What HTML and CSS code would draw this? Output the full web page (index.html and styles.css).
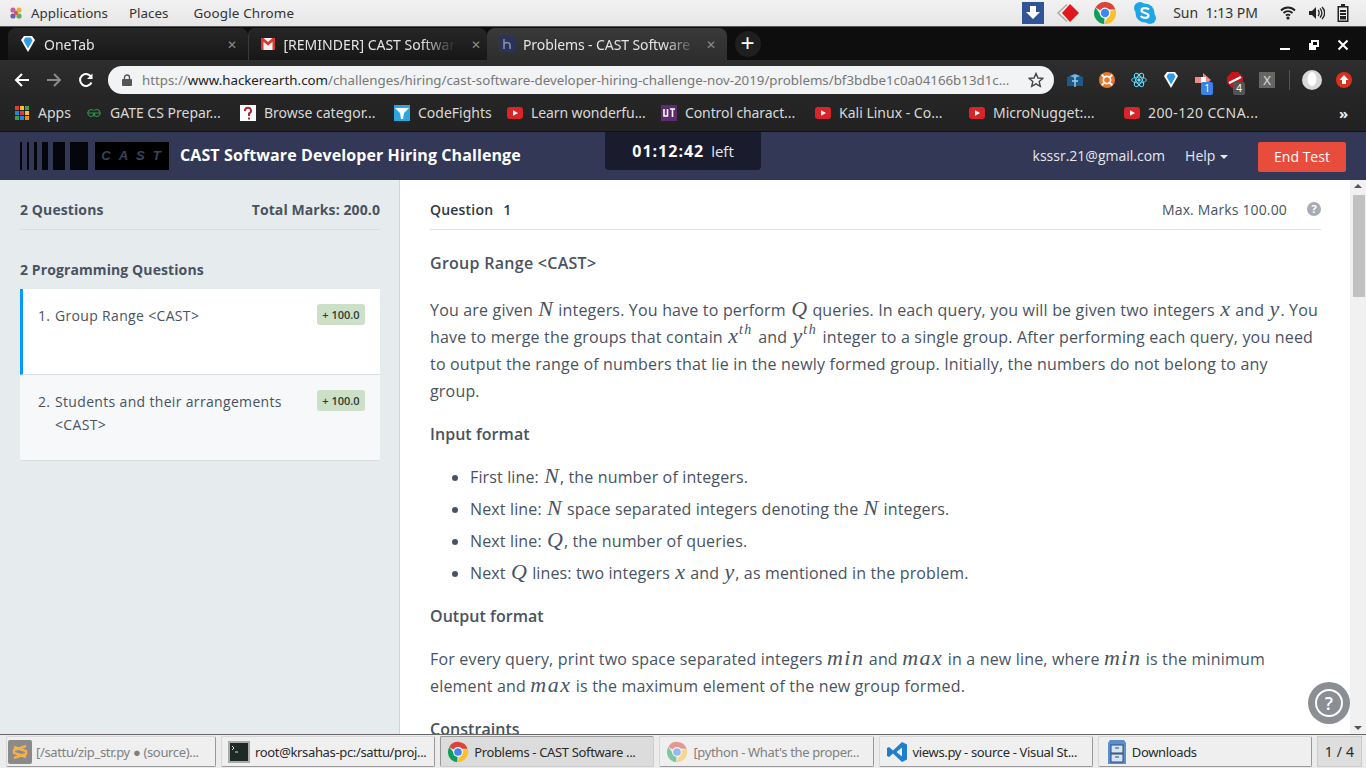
FILE: index.html
```html
<!DOCTYPE html>
<html>
<head>
	<title>Problems - CAST Software</title>
	<meta charset="UTF-8">
	<link rel="stylesheet" href="styles.css">
</head>
<body>

<svg class="defs" width="0" height="0">
	<symbol id="chrome" viewBox="0 0 24 24">
		<path d="M12 12 L2.5 6.5 A11 11 0 0 1 22.5 8.5 L12 8.5 Z" fill="#db4437"/>
		<path d="M12 12 L22.5 8.5 A11 11 0 0 1 11 23 L16 14 Z" fill="#fbc02d"/>
		<path d="M12 12 L11 23 A11 11 0 0 1 2.5 6.5 L8 14 Z" fill="#0f9d58"/>
		<circle cx="12" cy="12" r="5.4" fill="#fff"/>
		<circle cx="12" cy="12" r="4.2" fill="#4285f4"/>
	</symbol>
	<symbol id="yt" viewBox="0 0 16 12">
		<rect width="16" height="12" rx="3" fill="#d9252a"/>
		<path d="M6 3.2 L11 6 L6 8.8 Z" fill="#fff"/>
	</symbol>
	<symbol id="gem" viewBox="0 0 16 18">
		<path d="M1 5 L4 1 H12 L15 5 L8 17 Z" fill="#fff"/>
		<path d="M3.5 5.5 L5.5 2.5 H10.5 L12.5 5.5 L8 13.5 Z" fill="#2f9be8"/>
	</symbol>
</svg>

<div class="panel">
	<div class="panel-left">
		<svg class="panel-logo" width="16" height="16" viewBox="0 0 16 16"><circle cx="5" cy="5" r="2.6" fill="#c75ea8"/><circle cx="11" cy="5" r="2.6" fill="#e8b23a"/><circle cx="5" cy="11" r="2.6" fill="#6a5fb5"/><circle cx="11" cy="11" r="2.6" fill="#5fae5a"/><circle cx="8" cy="8" r="2" fill="#d8523c"/></svg>
		<span class="panel-app">Applications</span>
		<span class="panel-menu">Places</span>
		<span class="panel-menu panel-chrome">Google Chrome</span>
	</div>
	<div class="panel-right">
		<svg class="tray tray-dl" width="22" height="22" viewBox="0 0 22 22"><rect width="22" height="22" fill="#2f5597"/><path d="M8 4 H14 V10 H18 L11 17 L4 10 H8 Z" fill="#fff"/></svg>
		<svg class="tray tray-dia" width="24" height="20" viewBox="0 0 24 20"><path d="M11 1.5 L2 10 L11 18.5" fill="none" stroke="#aaa" stroke-width="1.5"/><path d="M6 10 L14 1 L23 10 L14 19 Z" fill="#e0181e"/></svg>
		<svg class="tray" width="24" height="24"><use href="#chrome"/></svg>
		<svg class="tray" width="24" height="24" viewBox="0 0 24 24"><circle cx="7" cy="7" r="6" fill="#1ea5e8"/><circle cx="17" cy="17" r="6" fill="#1ea5e8"/><circle cx="12" cy="12" r="9.5" fill="#1ea5e8"/><path d="M16 8.5 C14 6.5 8.5 6.5 8.5 9.5 C8.5 12.5 15.5 11.5 15.5 14.5 C15.5 17.5 9.5 17.5 7.8 15" fill="none" stroke="#fff" stroke-width="2.2"/></svg>
		<span class="clock">Sun&nbsp; 1:13 PM</span>
		<svg class="tray-wifi" width="16" height="14" viewBox="0 0 16 14"><path d="M1 4.5 C5 .5 11 .5 15 4.5 M3.5 7 C6 4.5 10 4.5 12.5 7 M6 9.5 C7 8.5 9 8.5 10 9.5" fill="none" stroke="#222" stroke-width="1.8"/><circle cx="8" cy="12" r="1.6" fill="#222"/></svg>
		<svg class="tray-vol" width="16" height="14" viewBox="0 0 16 14"><path d="M0 5 H3 L7 1 V13 L3 9 H0 Z" fill="#222"/><path d="M9 4 C10.5 5.5 10.5 8.5 9 10 M11 2.5 C13.5 5 13.5 9 11 11.5 M13 1 C16.5 4.5 16.5 9.5 13 13" fill="none" stroke="#222" stroke-width="1.3"/></svg>
		<svg width="12" height="18" viewBox="0 0 12 18"><path d="M4 0 H8 V2 H11.5 V18 H.5 V2 H4 Z" fill="#222"/><path d="M2 3.5 H10 V16.5 H2 Z" fill="#eee"/><path d="M3 6 H9 V8 H3 Z M3 9 H9 V11 H3 Z M3 12 H9 V15.5 H3 Z" fill="#222"/></svg>
	</div>
</div>

<div class="tabstrip">
	<div class="tab">
		<svg width="16" height="18"><use href="#gem"/></svg>
		<span class="tab-title">OneTab</span>
		<span class="tab-x">✕</span>
	</div>
	<div class="tab tab-mail">
		<svg width="14" height="12" viewBox="0 0 14 12"><rect width="14" height="12" fill="#f2f2f2"/><path d="M0 0 H2.5 L7 4 L11.5 0 H14 V12 H11.5 V3.8 L7 7.5 L2.5 3.8 V12 H0 Z" fill="#d93a2f"/></svg>
		<span class="tab-title">[REMINDER] CAST Software</span>
		<span class="tab-x">✕</span>
	</div>
	<div class="tab tab-active">
		<svg width="16" height="16" viewBox="0 0 16 16"><rect width="16" height="16" fill="#2b3358"/><path d="M5 3 V13 M5 8 C7 6 11 6 11 9 V13" fill="none" stroke="#8a92b0" stroke-width="1.5"/></svg>
		<span class="tab-title">Problems - CAST Software</span>
		<span class="tab-x">✕</span>
	</div>
	<div class="new-tab">+</div>
	<div class="win-btns">
		<svg width="12" height="12" viewBox="0 0 12 12"><rect x="1" y="9" width="10" height="2" fill="#fff"/></svg>
		<svg width="12" height="12" viewBox="0 0 12 12"><path d="M3 1 H11 V8 H8 V11 H1 V4 H3 Z M5 3 V6 H9 V3 Z" fill="#fff" fill-rule="evenodd"/></svg>
		<svg width="12" height="12" viewBox="0 0 12 12"><path d="M1.5 1.5 L10.5 10.5 M10.5 1.5 L1.5 10.5" stroke="#fff" stroke-width="2"/></svg>
	</div>
</div>

<div class="toolbar">
	<svg class="nav" width="16" height="16" viewBox="0 0 16 16"><path d="M15 8 H2 M8 2 L2 8 L8 14" fill="none" stroke="#fff" stroke-width="2"/></svg>
	<svg class="nav" width="16" height="16" viewBox="0 0 16 16"><path d="M1 8 H14 M8 2 L14 8 L8 14" fill="none" stroke="#8a8a8a" stroke-width="2"/></svg>
	<svg class="nav" width="16" height="16" viewBox="0 0 16 16"><path d="M13.5 10.5 A6 6 0 1 1 13 4.5" fill="none" stroke="#fff" stroke-width="2"/><path d="M14.5 1.5 V7 H9 Z" fill="#fff"/></svg>
	<div class="omnibox">
		<svg width="10" height="12" viewBox="0 0 10 12"><path d="M2.5 5 V3.5 A2.5 2.5 0 0 1 7.5 3.5 V5" fill="none" stroke="#555" stroke-width="1.4"/><rect y="5" width="10" height="7" rx="1" fill="#555"/></svg>
		<span class="url"><span class="url-dim">https://</span><span class="url-host">www.hackerearth.com</span><span class="url-dim">/challenges/hiring/cast-software-developer-hiring-challenge-nov-2019/problems/bf3bdbe1c0a04166b13d1c...</span></span>
		<svg class="star" width="16" height="16" viewBox="0 0 16 16"><path d="M8 1.5 L10 6 L14.8 6.4 L11.2 9.6 L12.3 14.4 L8 11.9 L3.7 14.4 L4.8 9.6 L1.2 6.4 L6 6 Z" fill="none" stroke="#444" stroke-width="1.4"/></svg>
	</div>
	<div class="exts">
		<svg width="16" height="16" viewBox="0 0 16 16"><path d="M0 5 L8 2 L16 5 V14 H0 Z" fill="#1d5a8a"/><path d="M3 4 L8 2 L13 4 L8 6 Z" fill="#6fb6e0"/><path d="M8 5 V15 M5 9 H11" stroke="#9fd0ee" stroke-width="1.4"/></svg>
		<svg width="16" height="16" viewBox="0 0 16 16"><circle cx="8" cy="8" r="8" fill="#e8772e"/><circle cx="8" cy="8" r="3.6" fill="none" stroke="#fff" stroke-width="1.6"/><path d="M2.8 2.8 L5.4 5.4 M13.2 2.8 L10.6 5.4 M2.8 13.2 L5.4 10.6 M13.2 13.2 L10.6 10.6" stroke="#fff" stroke-width="2"/></svg>
		<svg width="16" height="16" viewBox="0 0 16 16" fill="none" stroke="#61dafb" stroke-width=".9"><ellipse cx="8" cy="8" rx="7.4" ry="3"/><ellipse cx="8" cy="8" rx="7.4" ry="3" transform="rotate(60 8 8)"/><ellipse cx="8" cy="8" rx="7.4" ry="3" transform="rotate(120 8 8)"/><circle cx="8" cy="8" r="1.3" fill="#61dafb"/></svg>
		<svg width="16" height="18"><use href="#gem"/></svg>
		<div class="ext-badged">
			<svg width="16" height="16" viewBox="0 0 16 16"><path d="M0 5 H8 V1 L16 8 L8 15 V11 H0 Z" fill="#f08a86"/><rect x="6" y="5" width="5" height="6" fill="#fff"/></svg>
			<span class="badge badge-blue">1</span>
		</div>
		<div class="ext-badged">
			<svg width="16" height="16" viewBox="0 0 16 16"><path d="M5 0 H11 L16 5 V11 L11 16 H5 L0 11 V5 Z" fill="#c8141c"/><path d="M2 11 L14 5" stroke="#fff" stroke-width="2.4"/></svg>
			<span class="badge badge-grey">4</span>
		</div>
		<span class="ext-x">X</span>
		<span class="ext-sep"></span>
		<svg width="20" height="20" viewBox="0 0 20 20"><circle cx="10" cy="10" r="10" fill="#d8d8d8"/><ellipse cx="10" cy="9" rx="4.5" ry="7" fill="#fff"/></svg>
		<svg class="ext-last" width="16" height="16" viewBox="0 0 16 16"><circle cx="8" cy="8" r="8" fill="#d9301f"/><path d="M8 3 L12.5 8 H10 V12 H6 V8 H3.5 Z" fill="#fff"/></svg>
	</div>
</div>

<div class="bookmarks">
	<div class="bm bm-apps">
		<svg width="14" height="14" viewBox="0 0 14 14"><rect width="4" height="4" fill="#e53935"/><rect x="5" width="4" height="4" fill="#fbc02d"/><rect x="10" width="4" height="4" fill="#43a047"/><rect y="5" width="4" height="4" fill="#1e88e5"/><rect x="5" y="5" width="4" height="4" fill="#e53935"/><rect x="10" y="5" width="4" height="4" fill="#fbc02d"/><rect y="10" width="4" height="4" fill="#43a047"/><rect x="5" y="10" width="4" height="4" fill="#1e88e5"/><rect x="10" y="10" width="4" height="4" fill="#fb8c00"/></svg>
		<span>Apps</span>
	</div>
	<div class="bm bm-gate">
		<svg width="16" height="10" viewBox="0 0 16 10" fill="none" stroke="#2f8d46" stroke-width="1.1"><path d="M7.5 2.5 A3.3 3.3 0 1 0 7.5 7.5 V5 H1 M8.5 2.5 A3.3 3.3 0 1 1 8.5 7.5 V5 H15"/></svg>
		<span>GATE CS Prepar...</span>
	</div>
	<div class="bm bm-browse">
		<svg width="16" height="16" viewBox="0 0 16 16"><rect width="16" height="16" fill="#fff"/><path d="M5 6 A3 3 0 1 1 9 8.5 V11" fill="none" stroke="#b3262b" stroke-width="2"/><rect x="8" y="12.5" width="2" height="2" fill="#b3262b"/></svg>
		<span>Browse categor...</span>
	</div>
	<div class="bm bm-code">
		<svg width="16" height="16" viewBox="0 0 16 16"><rect width="16" height="16" fill="#2aa7df"/><path d="M1 3 H15 L10 8 L9 14 H7 L6 8 Z" fill="#fff"/></svg>
		<span>CodeFights</span>
	</div>
	<div class="bm bm-learn">
		<svg width="16" height="12"><use href="#yt"/></svg>
		<span>Learn wonderfu...</span>
	</div>
	<div class="bm bm-control">
		<svg width="16" height="16" viewBox="0 0 16 16"><rect width="16" height="16" fill="#5c2d6e"/><path d="M3 4 V11 H6.5 V4 M9 4 H14 M11.5 4 V12" fill="none" stroke="#fff" stroke-width="1.6"/></svg>
		<span>Control charact...</span>
	</div>
	<div class="bm bm-kali">
		<svg width="16" height="12"><use href="#yt"/></svg>
		<span>Kali Linux - Co...</span>
	</div>
	<div class="bm bm-micro">
		<svg width="16" height="12"><use href="#yt"/></svg>
		<span>MicroNugget:...</span>
	</div>
	<div class="bm bm-ccna">
		<svg width="16" height="12"><use href="#yt"/></svg>
		<span>200-120 CCNA...</span>
	</div>
	<span class="bm-more">»</span>
</div>

<header class="site-header">
	<div class="logo">
		<i class="bar w2"></i><i class="bar w2"></i><i class="bar w3"></i><i class="bar w6"></i><i class="bar w12"></i><i class="bar w18"></i>
		<span class="logo-box">CAST</span>
	</div>
	<div class="site-title">CAST Software Developer Hiring Challenge</div>
	<div class="timer"><b>01:12:42</b> left</div>
	<div class="header-right">
		<span class="email">ksssr.21@gmail.com</span>
		<span class="help">Help <i class="caret"></i></span>
		<span class="end-test">End Test</span>
	</div>
</header>

<div class="main">
	<aside class="sidebar">
		<div class="side-head">
			<span>2 Questions</span>
			<span>Total Marks: 200.0</span>
		</div>
		<div class="side-sub">2 Programming Questions</div>
		<div class="q-item q-current">
			<span class="q-num">1.</span>
			<span class="q-name">Group Range &lt;CAST&gt;</span>
			<span class="q-marks">+ 100.0</span>
		</div>
		<div class="q-item">
			<span class="q-num">2.</span>
			<span class="q-name">Students and their arrangements &lt;CAST&gt;</span>
			<span class="q-marks">+ 100.0</span>
		</div>
	</aside>

	<section class="content">
		<div class="q-head">
			<b>Question <span class="q-no">1</span></b>
			<span class="max-marks">Max. Marks 100.00</span>
			<span class="q-help">?</span>
		</div>
		<h2>Group Range &lt;CAST&gt;</h2>
		<p class="first">You are given <var>N</var> integers. You have to perform <var>Q</var> queries. In each query, you will be given two integers <var>x</var> and <var>y</var>. You have to merge the groups that contain <var>x<sup>th</sup></var> and <var>y<sup>th</sup></var> integer to a single group. After performing each query, you need to output the range of numbers that lie in the newly formed group. Initially, the numbers do not belong to any<br>group.</p>
		<h3>Input format</h3>
		<ul>
			<li>First line: <var>N</var>, the number of integers.</li>
			<li>Next line: <var>N</var> space separated integers denoting the <var>N</var> integers.</li>
			<li>Next line: <var>Q</var>, the number of queries.</li>
			<li>Next <var>Q</var> lines: two integers <var>x</var> and <var>y</var>, as mentioned in the problem.</li>
		</ul>
		<h3>Output format</h3>
		<p>For every query, print two space separated integers <var class="word">min</var> and <var class="word">max</var> in a new line, where <var class="word">min</var> is the minimum element and <var class="word">max</var> is the maximum element of the new group formed.</p>
		<h3>Constraints</h3>
		<div class="help-fab"><span>?</span></div>
	</section>

	<div class="scrollbar">
		<i class="arrow-up"></i>
		<div class="track"><div class="thumb"></div></div>
		<i class="arrow-down"></i>
	</div>
</div>

<div class="taskbar">
	<div class="task task-dim task-first">
		<svg width="24" height="24" viewBox="0 0 24 24"><rect width="24" height="24" rx="2" fill="#8a8a8a"/><path d="M18 6 L6 10 V13 L18 17 M6 18 L18 14 V11 L6 7" fill="none" stroke="#f5b04a" stroke-width="2.4"/></svg>
		<span>[/sattu/zip_str.py ● (source)...</span>
	</div>
	<div class="task">
		<svg width="22" height="22" viewBox="0 0 22 22"><rect width="22" height="22" fill="#aaa"/><rect x="2" y="2" width="18" height="18" fill="#1d2a26"/><path d="M4 5 L6 7 L4 9 M7 11 H10" fill="none" stroke="#ddd"/></svg>
		<span>root@krsahas-pc:/sattu/proj...</span>
	</div>
	<div class="task task-active">
		<svg width="22" height="22"><use href="#chrome"/></svg>
		<span>Problems - CAST Software ...</span>
	</div>
	<div class="task task-dim">
		<svg class="faded" width="22" height="22"><use href="#chrome"/></svg>
		<span>[python - What's the proper...</span>
	</div>
	<div class="task">
		<svg width="22" height="22" viewBox="0 0 22 22"><path d="M16 1 L21 3.5 V18.5 L16 21 L7 12.5 L3 16 L1 15 V7 L3 6 L7 9.5 Z M16 6.5 L10.5 11 L16 15.5 Z" fill="#1f7fcf" fill-rule="evenodd"/></svg>
		<span>views.py - source - Visual St...</span>
	</div>
	<div class="task task-files">
		<svg width="18" height="26" viewBox="0 0 18 26"><path d="M2 1 H16 L18 4 V25 H0 V4 Z" fill="#5a8fd0"/><rect x="3" y="6" width="12" height="8" fill="#d8e4f2" stroke="#2d4e7a"/><rect x="3" y="15" width="12" height="8" fill="#d8e4f2" stroke="#2d4e7a"/><path d="M7 9 H11 M7 18 H11" stroke="#2d4e7a"/></svg>
		<span>Downloads</span>
	</div>
	<div class="pager">1 / 4</div>
</div>

</body>
</html>
```

FILE: styles.css
```css
html, body {
	margin: 0;
	padding: 0;
}
body {
	width: 1366px;
	height: 768px;
	overflow: hidden;
	display: flex;
	flex-direction: column;
	font-family: "Open Sans", "Noto Sans", sans-serif;
	color: #49535f;
}
.defs { position: absolute; }
svg { display: block; flex: none; }

/* desktop panel */
.panel {
	height: 27px;
	flex: none;
	box-sizing: border-box;
	border-bottom: 1px solid #555;
	background: linear-gradient(#f2f2f2, #e6e6e6);
	display: flex;
	justify-content: space-between;
	align-items: center;
	font-family: "Noto Sans", sans-serif;
	font-size: 13.4px;
	color: #333;
	padding-bottom: 1px;
}
.panel-left { display: flex; align-items: center; padding-left: 8px; }
.panel-app { margin-left: 7px; }
.panel-menu { margin-left: 21px; }
.panel-chrome { margin-left: 25px; letter-spacing: .15px; }
.panel-right { display: flex; align-items: center; padding-right: 17px; }
.tray { margin-right: 16px; }
.tray-dl { margin-right: 12px; }
.tray-dia { margin-right: 13px; }
.clock { margin-right: 22px; margin-left: 0; font-size: 14px; }
.tray-wifi { margin-right: 13px; }
.tray-vol { margin-right: 12px; }

/* chrome tabs */
.tabstrip {
	height: 33px;
	flex: none;
	background: #0e0e0e;
	display: flex;
	align-items: flex-end;
	padding-left: 8px;
	font-family: "Noto Sans", sans-serif;
	font-size: 14px;
}
.tab {
	width: 239.5px;
	height: 32px;
	box-sizing: border-box;
	padding: 0 11px 0 12px;
	display: flex;
	align-items: center;
	gap: 8px;
	color: #e4e4e4;
	background: linear-gradient(#262626, #171717);
	border-radius: 8px 8px 0 0;
}
.tab + .tab { border-left: 1px solid #3a3a3a; }
.tab-mail { padding-right: 6px; gap: 9px; }
.tab-mail .tab-title { margin-right: 6px; }
.tab-active {
	background: linear-gradient(#3a3a3a, #2d2d2d);
	border-left: 0 !important;
}
.tab-active .tab-title { letter-spacing: -.1px; }
.tab-title {
	flex: 1;
	overflow: hidden;
	white-space: nowrap;
	-webkit-mask-image: linear-gradient(to right, #000 80%, transparent 100%);
	mask-image: linear-gradient(to right, #000 80%, transparent 100%);
}
.tab-x { font-size: 12px; color: #8a8a8a; }
.new-tab {
	width: 26px;
	height: 26px;
	margin: 0 0 3px 8px;
	border-radius: 50%;
	background: #1f1f1f;
	color: #fff;
	font-size: 24px;
	line-height: 24px;
	text-align: center;
	font-family: "Liberation Sans", sans-serif;
}
.win-btns {
	margin-left: auto;
	display: flex;
	gap: 17px;
	padding: 0 17px 9px 0;
}

/* chrome toolbar */
.toolbar {
	height: 34px;
	flex: none;
	box-sizing: border-box;
	padding: 6px 0 0 14px;
	background: linear-gradient(#2e2e2e, #262626);
	display: flex;
	align-items: center;
}
.nav { margin-right: 16px; }
.omnibox {
	width: 946px;
	height: 28px;
	margin-left: -2px;
	box-sizing: border-box;
	padding: 0 10px 0 14px;
	border-radius: 14px;
	background: #f1f3f4;
	display: flex;
	align-items: center;
	font-family: "Noto Sans", sans-serif;
	font-size: 13.3px;
}
.url {
	flex: 1;
	margin-left: 10px;
	white-space: nowrap;
	overflow: hidden;
}
.url-dim { color: #777; }
.url-host { color: #222; }
.star { margin-left: 2px; }
.exts {
	display: flex;
	align-items: center;
	gap: 16px;
	margin-left: 13px;
}
.ext-badged { position: relative; }
.badge {
	position: absolute;
	left: 6px;
	top: 10px;
	width: 12px;
	height: 13px;
	border-radius: 2px;
	color: #fff;
	font: 10px/13px "Noto Sans", sans-serif;
	text-align: center;
}
.badge-blue { background: #3b82e6; }
.badge-grey { background: #555; }
.ext-x {
	width: 16px;
	height: 16px;
	background: #666;
	color: #ddd;
	font: 13px/16px "Noto Sans", sans-serif;
	text-align: center;
}
.ext-sep { width: 1px; height: 20px; background: #555; margin: 0 -4px 0 -2px; }
.ext-last { margin-left: -2px; }

/* bookmarks */
.bookmarks {
	height: 38px;
	flex: none;
	background: linear-gradient(#262626, #222);
	display: flex;
	align-items: center;
	font-family: "Noto Sans", sans-serif;
	font-size: 14px;
	color: #d8d8d8;
	border-bottom: 1px solid #111;
	box-sizing: border-box;
}
.bm { display: flex; align-items: center; gap: 8px; white-space: nowrap; }
.bm-apps { margin-left: 15px; width: 71px; }
.bm-apps span { margin-left: 1px; }
.bm-gate { width: 154px; }
.bm-browse { width: 154px; }
.bm-code { width: 113px; }
.bm-learn { width: 154px; }
.bm-learn span, .bm-control span { letter-spacing: -.1px; }
.bm-control { width: 154px; }
.bm-kali { width: 154px; }
.bm-micro { width: 155px; }
.bm-ccna { width: 215px; }
.bm-ccna span { letter-spacing: .4px; }
.bm-more { font-size: 15px; font-weight: 700; color: #eee; }

/* page header */
.site-header {
	height: 48px;
	flex: none;
	background: #333856;
	display: flex;
	align-items: center;
	color: #fff;
	padding: 0 20px;
}
.logo { display: flex; align-items: center; width: 160px; gap: 5px; }
.bar { display: block; height: 28px; background: #05060c; }
.w2 { width: 2px; }
.w3 { width: 3px; }
.w6 { width: 6px; }
.w12 { width: 12px; }
.w18 { width: 18px; }
.logo-box {
	width: 74px;
	height: 28px;
	background: #000;
	margin-left: 2px;
	color: #3c4260;
	font: italic 700 13px/28px "Liberation Sans", sans-serif;
	letter-spacing: 8px;
	text-align: center;
	text-indent: 6px;
}
.site-title {
	font-size: 16px;
	font-weight: 700;
	letter-spacing: .1px;
	width: 425px;
	white-space: nowrap;
	margin-top: -2px;
}
.timer {
	width: 156px;
	height: 38px;
	align-self: flex-start;
	background: #1a1c2e;
	border-radius: 0 0 4px 4px;
	font-size: 15px;
	line-height: 38px;
	text-align: center;
	color: #e8e8e8;
}
.timer b { font-weight: 700; font-size: 16px; letter-spacing: 1px; margin-right: 3px; color: #fff; }
.header-right {
	margin-left: auto;
	display: flex;
	align-items: center;
	font-size: 14px;
	color: #e6e8ee;
}
.email, .help { margin-top: -1px; }
.help { margin-left: 20px; }
.caret {
	display: inline-block;
	border: 4px solid transparent;
	border-top-color: #e6e8ee;
	border-bottom: 0;
	vertical-align: 2px;
	margin-left: 1px;
}
.end-test {
	margin: 2px 0 0 30px;
	width: 88px;
	height: 30px;
	line-height: 30px;
	text-align: center;
	border-radius: 2px;
	background: #e74c3c;
	color: #fff;
}

/* main area */
.main {
	flex: 1;
	min-height: 0;
	display: flex;
	overflow: hidden;
}
.sidebar {
	width: 400px;
	flex: none;
	box-sizing: border-box;
	padding: 0 19px 0 20px;
	background: #e6ebed;
	border-right: 1px solid #cfd5d9;
	font-size: 14px;
}
.side-head {
	height: 50px;
	box-sizing: border-box;
	display: flex;
	justify-content: space-between;
	align-items: center;
	padding-top: 9px;
	font-weight: 700;
	letter-spacing: .1px;
	border-bottom: 1px solid #d6dcdf;
}
.side-sub {
	font-weight: 700;
	letter-spacing: .1px;
	margin-top: 30px;
	line-height: 20px;
	margin-bottom: 9px;
}
.q-item {
	position: relative;
	height: 86px;
	box-sizing: border-box;
	padding: 15px 70px 0 18px;
	background: #f6f8fa;
	border-bottom: 1px solid #d9dee1;
	display: flex;
	line-height: 23px;
	letter-spacing: .33px;
	font-weight: 500;
}
.q-current {
	background: #fff;
	border-left: 3px solid #0099ff;
	padding-left: 15px;
}
.q-num { width: 17px; flex: none; }
.q-name { flex: 1; }
.q-marks {
	position: absolute;
	right: 15px;
	top: 15px;
	width: 48px;
	height: 21px;
	border-radius: 3px;
	background: #cce0c8;
	color: #2f3a33;
	font-size: 11px;
	font-weight: 600;
	line-height: 21px;
	text-align: center;
	letter-spacing: 0;
}

.content {
	flex: 1;
	min-width: 0;
	position: relative;
	box-sizing: border-box;
	padding: 0 29px 0 30px;
	background: #fff;
	font-size: 16px;
	letter-spacing: .18px;
	overflow: hidden;
}
.q-head {
	height: 50px;
	box-sizing: border-box;
	padding-top: 9px;
	display: flex;
	align-items: center;
	font-size: 14px;
	letter-spacing: .15px;
	border-bottom: 1px solid #dfe3e6;
}
.q-head b { font-weight: 600; color: #2f3740; flex: 1; letter-spacing: .2px; }
.q-no { margin-left: 6px; }
.max-marks { margin-right: 20px; }
.q-help {
	width: 14px;
	height: 14px;
	border-radius: 50%;
	background: #a6acb3;
	color: #fff;
	font-size: 11px;
	font-weight: 700;
	line-height: 14px;
	text-align: center;
	letter-spacing: 0;
}
.content h2 {
	font-size: 16px;
	font-weight: 600;
	line-height: 27px;
	letter-spacing: .28px;
	margin: 20px 0 0;
}
.content h3 {
	font-size: 16px;
	font-weight: 600;
	line-height: 27px;
	letter-spacing: .05px;
	margin: 16px 0 0;
}
.content p {
	margin: 16px 0 0;
	line-height: 27px;
}
.content p.first { margin-top: 20px; }
.content ul {
	margin: 16px 0 0;
	padding: 0 0 0 40px;
}
.content li { line-height: 27px; margin-bottom: 5px; letter-spacing: .14px; }
var {
	font-family: "Liberation Serif", serif;
	font-style: italic;
	font-size: 22px;
	line-height: 0;
	letter-spacing: 0;
	padding: 0 1px;
}
var.word { letter-spacing: 1.5px; padding: 0; }
var sup {
	font-size: 14px;
	line-height: 0;
	letter-spacing: 1.5px;
	margin-left: 1px;
	vertical-align: 9px;
}

.help-fab {
	position: absolute;
	right: 0;
	bottom: 10px;
	width: 42px;
	height: 42px;
	border-radius: 50%;
	background: #8b8f94;
	display: flex;
	align-items: center;
	justify-content: center;
}
.help-fab span {
	width: 24px;
	height: 24px;
	border: 2px solid #fff;
	border-radius: 50%;
	color: #fff;
	font-size: 18px;
	font-weight: 600;
	line-height: 24px;
	text-align: center;
}

.scrollbar {
	width: 16px;
	flex: none;
	background: #f1f1f1;
	display: flex;
	flex-direction: column;
	align-items: center;
}
.arrow-up, .arrow-down {
	width: 0;
	flex: none;
	border: 4px solid transparent;
	margin: 4px 0;
}
.arrow-up { border-bottom-color: #555; border-top: 0; }
.arrow-down { border-top-color: #555; border-bottom: 0; }
.track { flex: 1; width: 100%; padding-top: 3px; }
.thumb {
	height: 102px;
	margin: 0 1px 0 3px;
	background: #c1c1c1;
}

/* desktop taskbar */
.taskbar {
	height: 34px;
	flex: none;
	box-sizing: border-box;
	border-top: 1px solid #666;
	background: #ececec;
	display: flex;
	align-items: center;
	padding: 0 5px 0 6px;
	gap: 5px;
	font-family: "Noto Sans", sans-serif;
	font-size: 13px;
	letter-spacing: -.35px;
	color: #2a2a2a;
}
.task {
	width: 214.2px;
	height: 31px;
	flex: none;
	box-sizing: border-box;
	padding: 0 0 0 6px;
	display: flex;
	align-items: center;
	gap: 5px;
	white-space: nowrap;
	overflow: hidden;
	background: #efefef;
	border: 1px solid #d8d8d8;
	border-right-color: #999;
	border-bottom-color: #999;
	border-radius: 2px;
}
.task-first { width: 210px; padding-left: 1px; gap: 4px; }
.task-files { padding-left: 9px; gap: 6px; }
.task-dim { color: #808080; }
.task-active {
	background: #dcdcdc;
	border-color: #999 #ccc #ccc #999;
}
.faded { opacity: .5; }
.pager {
	width: 45px;
	height: 31px;
	flex: none;
	box-sizing: border-box;
	background: #dedede;
	border: 1px solid #ccc;
	text-align: center;
	line-height: 29px;
	font-size: 14px;
	letter-spacing: .2px;
}
```
